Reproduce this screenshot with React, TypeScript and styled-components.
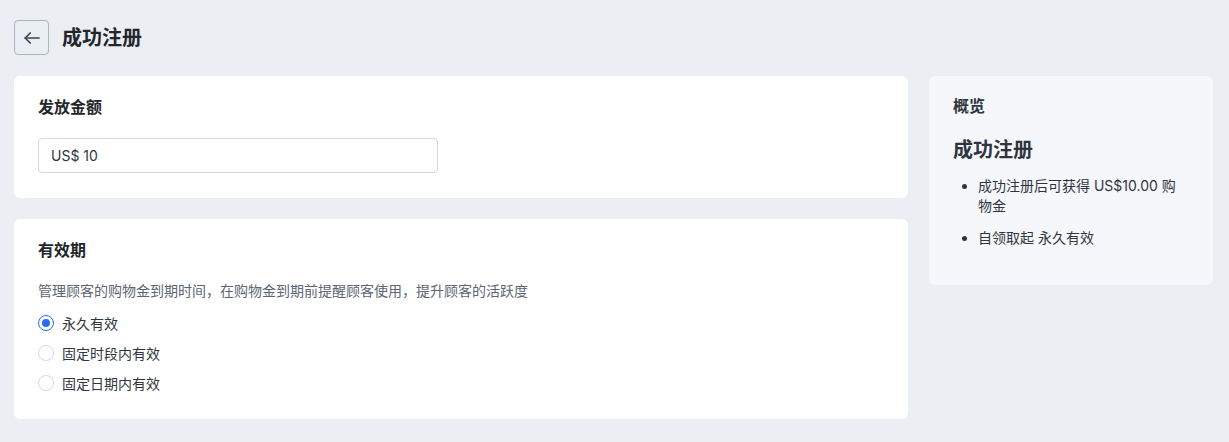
import React from 'react';
import styled, { createGlobalStyle } from 'styled-components';

const GlobalStyle = createGlobalStyle`
  html, body {
    margin: 0;
    padding: 0;
    background: #ebeef2;
    font-family: Inter, "Noto Sans CJK SC", sans-serif;
    color: #1f2328;
  }
`

const Page = styled.div`
  padding: 20px 16px 20px 14px;
`

const Header = styled.header`
  display: flex;
  align-items: center;
  gap: 13px;
  height: 35px;
  margin-bottom: 21px;
`

const BackBtn = styled.button`
  width: 35px;
  height: 35px;
  box-sizing: border-box;
  border: 1px solid #adb5c2;
  border-radius: 4px;
  background: transparent;
  display: flex;
  align-items: center;
  justify-content: center;
  padding: 0;
  color: #3b4350;
`

const Title = styled.h1`
  margin: 0;
  font-size: 20px;
  line-height: 28px;
  font-weight: 700;
  color: #22262b;
`

const Layout = styled.div`
  display: grid;
  grid-template-columns: 1fr 284px;
  gap: 21px;
  align-items: start;
`

const Column = styled.div`
  display: flex;
  flex-direction: column;
  gap: 21px;
`

const Card = styled.section<{ $bottom?: number }>`
  background: #fff;
  border-radius: 6px;
  padding: 19px 24px ${p => p.$bottom ?? 25}px;
`

const CardTitle = styled.h2`
  margin: 0 0 19px;
  font-size: 16px;
  line-height: 24px;
  font-weight: 700;
  color: #22262b;
`

const Input = styled.input`
  display: block;
  width: 400px;
  height: 35px;
  box-sizing: border-box;
  border: 1px solid #d3d8e0;
  border-radius: 4px;
  padding: 0 12px;
  font-family: inherit;
  font-size: 14px;
  color: #2f3540;
  outline: none;
`

const Desc = styled.p`
  margin: 0 0 7px;
  font-size: 14px;
  line-height: 20px;
  color: #5b6574;
`

const RadioList = styled.div`
  display: flex;
  flex-direction: column;
`

const RadioRow = styled.label`
  display: flex;
  align-items: center;
  gap: 8px;
  height: 30px;
  font-size: 14px;
  color: #2f3540;
`

const RadioDot = styled.span<{ $on?: boolean }>`
  width: 16px;
  height: 16px;
  box-sizing: border-box;
  border-radius: 50%;
  border: 1px solid ${p => (p.$on ? '#2a6cf6' : '#d3d8e0')};
  background: #fff;
  display: flex;
  align-items: center;
  justify-content: center;
  &::after {
    content: '';
    display: ${p => (p.$on ? 'block' : 'none')};
    width: 8px;
    height: 8px;
    border-radius: 50%;
    background: #2a6cf6;
  }
`

const Summary = styled.aside`
  background: #f5f7fa;
  border-radius: 6px;
  padding: 19px 24px 37px;
`

const SummaryLabel = styled.div`
  font-size: 16px;
  line-height: 22px;
  font-weight: 700;
  color: #2f3540;
  margin-bottom: 19px;
`

const SummaryTitle = styled.div`
  font-size: 20px;
  line-height: 28px;
  font-weight: 700;
  color: #2f3540;
  margin-bottom: 12px;
`

const Bullets = styled.ul`
  margin: 0;
  padding-left: 25px;
  font-size: 14px;
  line-height: 20px;
  color: #2f3540;
  li + li {
    margin-top: 12px;
  }
`

const options = ['永久有效', '固定时段内有效', '固定日期内有效']

function App() {
    return (
        <>
            <GlobalStyle/>
            <Page>
                <Header>
                    <BackBtn aria-label="back">
                        <svg width="16" height="12" viewBox="0 0 16 12" fill="none" stroke="currentColor" strokeWidth="1.7" strokeLinecap="round" strokeLinejoin="round">
                            <path d="M15 6H1.2"/>
                            <path d="M6.2 1L1.2 6l5 5"/>
                        </svg>
                    </BackBtn>
                    <Title>成功注册</Title>
                </Header>
                <Layout>
                    <Column>
                        <Card>
                            <CardTitle>发放金额</CardTitle>
                            <Input defaultValue="US$ 10"/>
                        </Card>
                        <Card $bottom={21}>
                            <CardTitle>有效期</CardTitle>
                            <Desc>管理顾客的购物金到期时间，在购物金到期前提醒顾客使用，提升顾客的活跃度</Desc>
                            <RadioList>
                                {options.map((o, i) => (
                                    <RadioRow key={o}>
                                        <RadioDot $on={i === 0}/>
                                        {o}
                                    </RadioRow>
                                ))}
                            </RadioList>
                        </Card>
                    </Column>
                    <Summary>
                        <SummaryLabel>概览</SummaryLabel>
                        <SummaryTitle>成功注册</SummaryTitle>
                        <Bullets>
                            <li>成功注册后可获得 US$10.00 购物金</li>
                            <li>自领取起 永久有效</li>
                        </Bullets>
                    </Summary>
                </Layout>
            </Page>
        </>
    );
}

export default App;
